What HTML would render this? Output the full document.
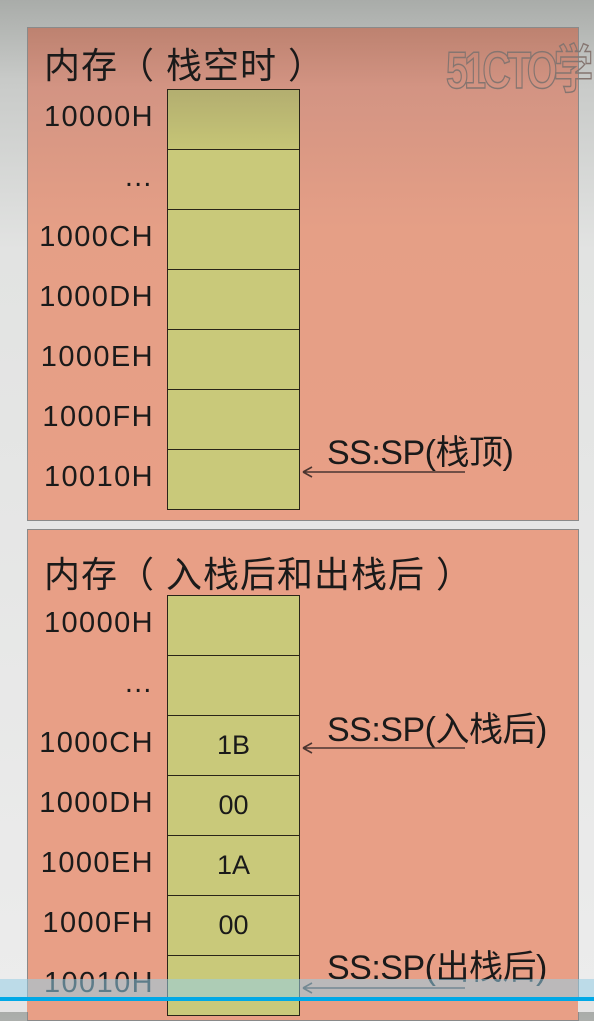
<!DOCTYPE html>
<html><head><meta charset="utf-8"><style>
body{margin:0;width:594px;height:1012px;overflow:hidden;position:relative;background:linear-gradient(#a9aca9 0px,#c8cac8 80px,#e2e3e2 250px,#ececec 1012px);font-family:"Liberation Sans","Noto Sans CJK SC",sans-serif;color:#1a1a1a}
.p{position:absolute;left:27px;width:550px;border:1px solid #8a8a8a}
#p1{top:27px;height:492px;background:linear-gradient(#bd8270 0px,#d39483 60px,#e59f86 200px,#e89f86 492px)}
#p2{top:529px;height:490px;background:#e89f86}
.t{position:absolute;font-size:36px;white-space:nowrap;letter-spacing:1px}
.c{position:absolute;left:167px;width:131px;height:59px;border:1px solid #2a2418;background:#c9c97a;text-align:center;line-height:59px;font-size:27px}
.l{position:absolute;right:440px;font-size:29px;white-space:nowrap;letter-spacing:1.4px}
.a{position:absolute;left:301px;width:166px;height:12px}
.s{position:absolute;left:327px;font-size:34px;white-space:nowrap;letter-spacing:-0.5px}
</style></head><body>
<div class="p" id="p1"></div>
<div class="p" id="p2"></div>
<div class="t" style="left:44px;top:37px">内存（ 栈空时 ）</div>
<div style="position:absolute;left:446px;top:28px;font-size:52px;font-weight:bold;color:transparent;-webkit-text-stroke:1.5px #857570;letter-spacing:-5px;transform:scaleX(0.76);transform-origin:0 0;white-space:nowrap">51CTO学</div>
<div class="c" style="top:89px;background:linear-gradient(#b3ae70,#c6c576)"></div>
<div class="c" style="top:149px"></div>
<div class="c" style="top:209px"></div>
<div class="c" style="top:269px"></div>
<div class="c" style="top:329px"></div>
<div class="c" style="top:389px"></div>
<div class="c" style="top:449px"></div>
<div class="l" style="top:101px">10000H</div>
<div class="l" style="top:161px">…</div>
<div class="l" style="top:221px">1000CH</div>
<div class="l" style="top:281px">1000DH</div>
<div class="l" style="top:341px">1000EH</div>
<div class="l" style="top:401px">1000FH</div>
<div class="l" style="top:461px">10010H</div>
<div class="s" style="top:425px">SS:SP(栈顶)</div>
<svg class="a" style="top:466px" viewBox="0 0 166 12"><path d="M2 6H164M2 6L11 1M2 6L11 11" stroke="#4a3530" stroke-width="1.6" fill="none"/></svg>

<div class="t" style="left:44px;top:546px">内存（ 入栈后和出栈后 ）</div>
<div class="c" style="top:595px"></div>
<div class="c" style="top:655px"></div>
<div class="c" style="top:715px">1B</div>
<div class="c" style="top:775px">00</div>
<div class="c" style="top:835px">1A</div>
<div class="c" style="top:895px">00</div>
<div class="c" style="top:955px"></div>
<div class="l" style="top:607px">10000H</div>
<div class="l" style="top:667px">…</div>
<div class="l" style="top:727px">1000CH</div>
<div class="l" style="top:787px">1000DH</div>
<div class="l" style="top:847px">1000EH</div>
<div class="l" style="top:907px">1000FH</div>
<div class="l" style="top:967px">10010H</div>
<div class="s" style="top:702px">SS:SP(入栈后)</div>
<svg class="a" style="top:742px" viewBox="0 0 166 12"><path d="M2 6H164M2 6L11 1M2 6L11 11" stroke="#4a3530" stroke-width="1.6" fill="none"/></svg>
<div class="s" style="top:940px">SS:SP(出栈后)</div>
<svg class="a" style="top:982px" viewBox="0 0 166 12"><path d="M2 6H164M2 6L11 1M2 6L11 11" stroke="#4a3530" stroke-width="1.6" fill="none"/></svg>
<div style="position:absolute;left:0;top:979px;width:594px;height:19px;background:rgba(150,205,230,0.55)"></div>
<div style="position:absolute;left:0;top:997px;width:594px;height:4px;background:#00a8e6"></div>
<div style="position:absolute;left:0;top:1001px;width:594px;height:11px;background:#e89f86"></div>
<div style="position:absolute;left:0;top:1001px;width:27px;height:11px;background:#e4e4e4"></div>
<div style="position:absolute;left:578px;top:1001px;width:16px;height:11px;background:#e4e4e4"></div>
<div style="position:absolute;left:167px;top:1001px;width:131px;height:11px;background:#c9c97a;border-left:1px solid #2a2418;border-right:1px solid #2a2418"></div>
</body></html>
